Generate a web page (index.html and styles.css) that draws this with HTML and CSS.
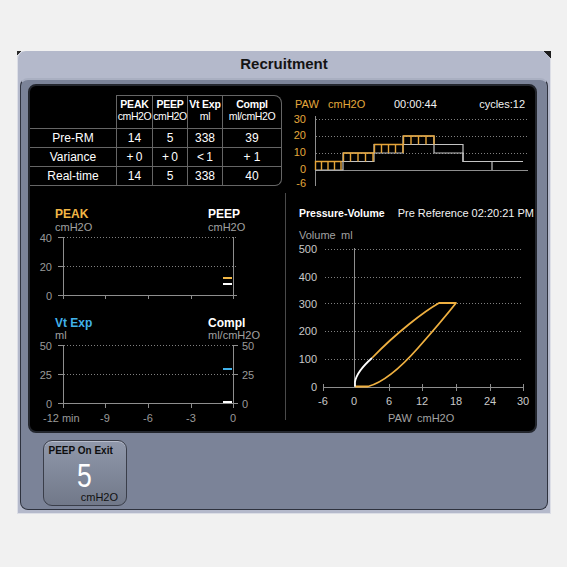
FILE: index.html
```html
<!DOCTYPE html>
<html>
<head>
<meta charset="utf-8">
<title>Recruitment</title>
<link rel="stylesheet" href="styles.css">
</head>
<body>
<div class="window">
  <div class="title">Recruitment</div>
  <div class="panel">
    <div class="screen">
      <div class="cell table-cell">
        <table class="rm">
          <colgroup><col class="c-label"><col class="c-peak"><col class="c-peep"><col class="c-vt"><col class="c-compl"></colgroup>
          <tr class="head">
            <td class="corner"></td>
            <td><b>PEAK</b><br><span class="unit">cmH2O</span></td>
            <td><b>PEEP</b><br><span class="unit">cmH2O</span></td>
            <td><b>Vt Exp</b><br><span class="unit">ml</span></td>
            <td class="tr"><b>Compl</b><br><span class="unit">ml/cmH2O</span></td>
          </tr>
          <tr class="row">
            <td class="lbl">Pre-RM</td><td>14</td><td>5</td><td>338</td><td>39</td>
          </tr>
          <tr class="row">
            <td class="lbl">Variance</td><td>+&#8201;0</td><td>+&#8201;0</td><td>&lt;&#8201;1</td><td>+ 1</td>
          </tr>
          <tr class="row last">
            <td class="lbl">Real-time</td><td>14</td><td>5</td><td>338</td><td class="br">40</td>
          </tr>
        </table>
      </div>

      <div class="cell paw-cell">
        <svg class="chart" width="250" height="104" viewBox="0 0 250 104">
          <text class="t-or" x="10" y="22">PAW</text>
          <text class="t-or" x="43" y="22">cmH2O</text>
          <text class="t-wh" x="109" y="22">00:00:44</text>
          <text class="t-wh" x="240" y="22" text-anchor="end">cycles:12</text>
          <text class="t-or" x="21" y="37" text-anchor="end">30</text>
          <text class="t-or" x="21" y="53" text-anchor="end">20</text>
          <text class="t-or" x="21" y="70" text-anchor="end">10</text>
          <text class="t-or" x="21" y="87" text-anchor="end">0</text>
          <text class="t-or" x="21" y="101" text-anchor="end">-6</text>
          <path class="dot" d="M31 33.5H243 M31 50.5H243 M31 67.5H243"/>
          <path class="axis" d="M30.5 30V100 M30 84.5H243"/>
          <path class="env" d="M30 75.5H58V67H89V58.5H118V50H149V58.5H178V75.5H238"/>
          <path class="env" d="M30 84H58V75.5H89V67H118V58.5H149V67H178V75.5H207V84"/>
          <path class="wave" d="M30.5 84V75.5H56V84 M36.5 75.5V84 M43 75.5V84 M49.5 75.5V84"/>
          <path class="wave" d="M58.5 75.5V67H88V75.5 M65.5 67V75.5 M73 67V75.5 M80.5 67V75.5"/>
          <path class="wave" d="M89.5 67V58.5H118V67 M96.5 58.5V67 M103.5 58.5V67 M110.5 58.5V67"/>
          <path class="wave" d="M118.5 58.5V50H149V58.5 M126 50V58.5 M133.5 50V58.5 M141 50V58.5"/>
        </svg>
      </div>

      <div class="cell trend-cell">
        <svg class="chart" width="255" height="241" viewBox="2 0 255 241">
          <text class="t-bold c-or" x="27" y="28">PEAK</text>
          <text class="t-gray" x="27" y="41">cmH2O</text>
          <text class="t-bold c-wh" x="180" y="28">PEEP</text>
          <text class="t-gray" x="180" y="41">cmH2O</text>
          <text class="t-ax" x="24" y="52" text-anchor="end">40</text>
          <text class="t-ax" x="24" y="81" text-anchor="end">20</text>
          <text class="t-ax" x="24" y="110" text-anchor="end">0</text>
          <path class="dot" d="M36 47.5H209 M36 76.5H209"/>
          <path class="axis" d="M35.5 47V109 M205.5 47V109 M30 47.5H35 M30 76.5H35 M30 105.5H209 M77.5 105V109 M120.5 105V109 M163.5 105V109"/>
          <path class="bar-or" d="M195 88H204"/>
          <path class="bar-wh" d="M195 94H204"/>

          <text class="t-bold c-bl" x="27" y="137">Vt Exp</text>
          <text class="t-gray" x="27" y="149">ml</text>
          <text class="t-bold c-wh" x="180" y="137">Compl</text>
          <text class="t-gray" x="180" y="149">ml/cmH2O</text>
          <text class="t-ax" x="24" y="160" text-anchor="end">50</text>
          <text class="t-ax" x="24" y="189" text-anchor="end">25</text>
          <text class="t-ax" x="24" y="218" text-anchor="end">0</text>
          <text class="t-ax" x="214" y="160">50</text>
          <text class="t-ax" x="214" y="189">25</text>
          <text class="t-ax" x="214" y="218">0</text>
          <path class="dot" d="M36 155.5H205 M36 184.5H205"/>
          <path class="axis" d="M35.5 155V218 M205.5 155V218 M30 155.5H35 M30 184.5H35 M206 155.5H210 M206 184.5H210 M30 213.5H210 M77.5 213V218 M120.5 213V218 M163.5 213V218"/>
          <path class="bar-bl" d="M195 179H204"/>
          <path class="bar-wh" d="M195 212H204"/>
          <text class="t-ax" x="15" y="232">-12 min</text>
          <text class="t-ax" x="77" y="232" text-anchor="middle">-9</text>
          <text class="t-ax" x="120" y="232" text-anchor="middle">-6</text>
          <text class="t-ax" x="163" y="232" text-anchor="middle">-3</text>
          <text class="t-ax" x="205" y="232" text-anchor="middle">0</text>
        </svg>
      </div>

      <div class="cell pv-cell">
        <svg class="chart" width="250" height="241" viewBox="0 0 250 241">
          <path class="divider" d="M0.5 3V230"/>
          <text class="t-bold c-wh t-pv" x="14" y="27">Pressure-Volume</text>
          <text class="t-wh" x="249" y="27" text-anchor="end">Pre Reference 02:20:21 PM</text>
          <text class="t-gray" x="14" y="49">Volume</text>
          <text class="t-gray" x="56" y="49">ml</text>
          <text class="t-lt" x="32" y="63" text-anchor="end">500</text>
          <text class="t-lt" x="32" y="91" text-anchor="end">400</text>
          <text class="t-lt" x="32" y="118" text-anchor="end">300</text>
          <text class="t-lt" x="32" y="145" text-anchor="end">200</text>
          <text class="t-lt" x="32" y="173" text-anchor="end">100</text>
          <text class="t-lt" x="32" y="201" text-anchor="end">0</text>
          <path class="dot" d="M40 59.5H238 M40 87.5H238 M40 113.5H238 M40 141.5H238 M40 169.5H238"/>
          <path class="axis" d="M69.5 58V197 M38 197.5H238 M38.5 194V201 M104.5 194V201 M137.5 194V201 M171.5 194V201 M205.5 194V201 M238.5 194V201"/>
          <text class="t-lt" x="38" y="215" text-anchor="middle">-6</text>
          <text class="t-lt" x="69" y="215" text-anchor="middle">0</text>
          <text class="t-lt" x="104" y="215" text-anchor="middle">6</text>
          <text class="t-lt" x="137" y="215" text-anchor="middle">12</text>
          <text class="t-lt" x="171" y="215" text-anchor="middle">18</text>
          <text class="t-lt" x="205" y="215" text-anchor="middle">24</text>
          <text class="t-lt" x="238" y="215" text-anchor="middle">30</text>
          <text class="t-gray" x="103" y="232">PAW</text>
          <text class="t-gray" x="132" y="232">cmH2O</text>
          <path class="loop" d="M70 196.5H83C100 192 118 175 133 158S160 127 171 113H154C140 121 112 142 87 168"/>
          <path class="loop-wh" d="M87 168C78 176 71 185 70 192V196.5"/>
        </svg>
      </div>
    </div>

    <div class="peep-btn">
      <div class="btn-label">PEEP On Exit</div>
      <div class="btn-value"><span class="digit">5</span></div>
      <div class="btn-unit">cmH2O</div>
    </div>
  </div>
</div>
</body>
</html>
```

FILE: styles.css
```css
* {
  box-sizing: border-box;
}

body {
  margin: 0;
  padding: 51px 0 0 17px;
  background: #f1f1f1;
  font-family: "Liberation Sans", Arial, sans-serif;
}

.window {
  position: relative;
  width: 534px;
  height: 463px;
  background: #b4b9cb;
  border-radius: 8px 8px 0 0;
  padding: 0 3px 4px 3px;
  display: flex;
  flex-direction: column;
  box-shadow: inset 1px 0 0 #dcdee6, inset -1px 0 0 #dcdee6, inset 0 -1px 0 #dcdee6;
}

.window::before,
.window::after {
  content: "";
  position: absolute;
  top: 0;
}

.window::before {
  left: 0;
  width: 5px;
  height: 5px;
  background: linear-gradient(135deg, #2b2b2b 45%, transparent 46%);
}

.window::after {
  right: 0;
  width: 7px;
  height: 9px;
  background: linear-gradient(225deg, #1e1e1e 45%, transparent 46%);
}

.title {
  height: 27px;
  line-height: 25px;
  text-align: center;
  font-weight: bold;
  font-size: 15px;
  color: #141414;
}

.panel {
  flex: 1;
  background: #7b8398;
  border: 1px solid #2e323e;
  border-top: 2px solid #a9afc1;
  border-radius: 8px;
  padding: 4px 10px 0 7px;
}

.screen {
  height: 349px;
  background: #000;
  border: 2px solid #23262d;
  border-radius: 8px;
  display: grid;
  grid-template-columns: 255px 250px;
  grid-template-rows: 104px 241px;
}

.cell {
  overflow: hidden;
}

.chart {
  display: block;
}

/* ---------- table ---------- */
.table-cell {
  padding-top: 9px;
}

.rm {
  margin-left: -1px;
  border-collapse: separate;
  border-spacing: 0;
  table-layout: fixed;
  width: 253px;
  color: #fff;
  font-size: 12px;
}

.c-label { width: 88px; }
.c-peak { width: 36px; }
.c-peep { width: 35px; }
.c-vt { width: 35px; }
.c-compl { width: 59px; }

.rm td {
  border-right: 1px solid #666;
  border-bottom: 1px solid #666;
  text-align: center;
  padding: 0;
  white-space: nowrap;
}

.rm .head td {
  height: 34px;
  vertical-align: top;
  padding-top: 2px;
  line-height: 12px;
  border-top: 1px solid #666;
  font-size: 10.5px;
}

.rm .head td b {
  font-weight: bold;
  letter-spacing: -0.2px;
}

.rm .head .unit {
  letter-spacing: -0.4px;
}

.rm .head td.corner {
  border-top: none;
}

.rm .head td.tr {
  border-top-right-radius: 8px;
}

.rm .row td {
  height: 19px;
  line-height: 18px;
}

.rm .row td.lbl {
  border-left: 1px solid #666;
}

.rm .row td.br {
  border-bottom-right-radius: 7px;
}

/* ---------- svg charts ---------- */
.chart text {
  font-family: "Liberation Sans", Arial, sans-serif;
  font-size: 11px;
}

.t-or { fill: #e4a83c; }
.t-wh { fill: #f2f2f2; }
.t-gray { fill: #a2a2a2; }
.t-ax { fill: #9a9a9a; }
.t-lt { fill: #c9c9c9; }

.chart .t-bold {
  font-weight: bold;
  font-size: 12px;
}

.chart .t-pv {
  font-size: 10.5px;
}

.c-or { fill: #f2b746; }
.c-wh { fill: #ffffff; }
.c-bl { fill: #41b2ea; }

.dot {
  stroke: #808080;
  stroke-width: 1;
  stroke-dasharray: 1 2;
  fill: none;
}

.axis {
  stroke: #8e8e8e;
  stroke-width: 1;
  fill: none;
}

.divider {
  stroke: #4a4a4a;
  stroke-width: 1;
  fill: none;
}

.env {
  stroke: #c4c4c4;
  stroke-width: 1.2;
  fill: none;
}

.wave {
  stroke: #e6a53a;
  stroke-width: 1.4;
  fill: none;
}

.bar-or { stroke: #f2b746; stroke-width: 2; }
.bar-wh { stroke: #ffffff; stroke-width: 2; }
.bar-bl { stroke: #41b2ea; stroke-width: 2; }

.loop {
  stroke: #efb040;
  stroke-width: 1.8;
  fill: none;
  stroke-linejoin: round;
}

.loop-wh {
  stroke: #ffffff;
  stroke-width: 1.8;
  fill: none;
}

/* ---------- button ---------- */
.peep-btn {
  width: 84px;
  height: 66px;
  margin: 7px 0 0 15px;
  border: 1.5px solid #3a3e4a;
  border-radius: 9px;
  background: linear-gradient(#9098ab, #717889);
  box-shadow: inset 0 1px 0 #b8bdcc;
  padding: 4px 8px 0 4.5px;
  display: flex;
  flex-direction: column;
}

.btn-label {
  font-weight: bold;
  font-size: 10px;
  line-height: 11px;
  color: #0e0e0e;
  white-space: nowrap;
}

.btn-value {
  margin-top: 4px;
  height: 30px;
  font-size: 34px;
  line-height: 30px;
  color: #fff;
  text-align: center;
  padding-left: 3px;
}

.btn-value .digit {
  display: inline-block;
  transform: scaleX(0.78);
}

.btn-unit {
  margin-top: 2px;
  font-size: 11px;
  line-height: 11px;
  color: #111;
  text-align: right;
}
```
